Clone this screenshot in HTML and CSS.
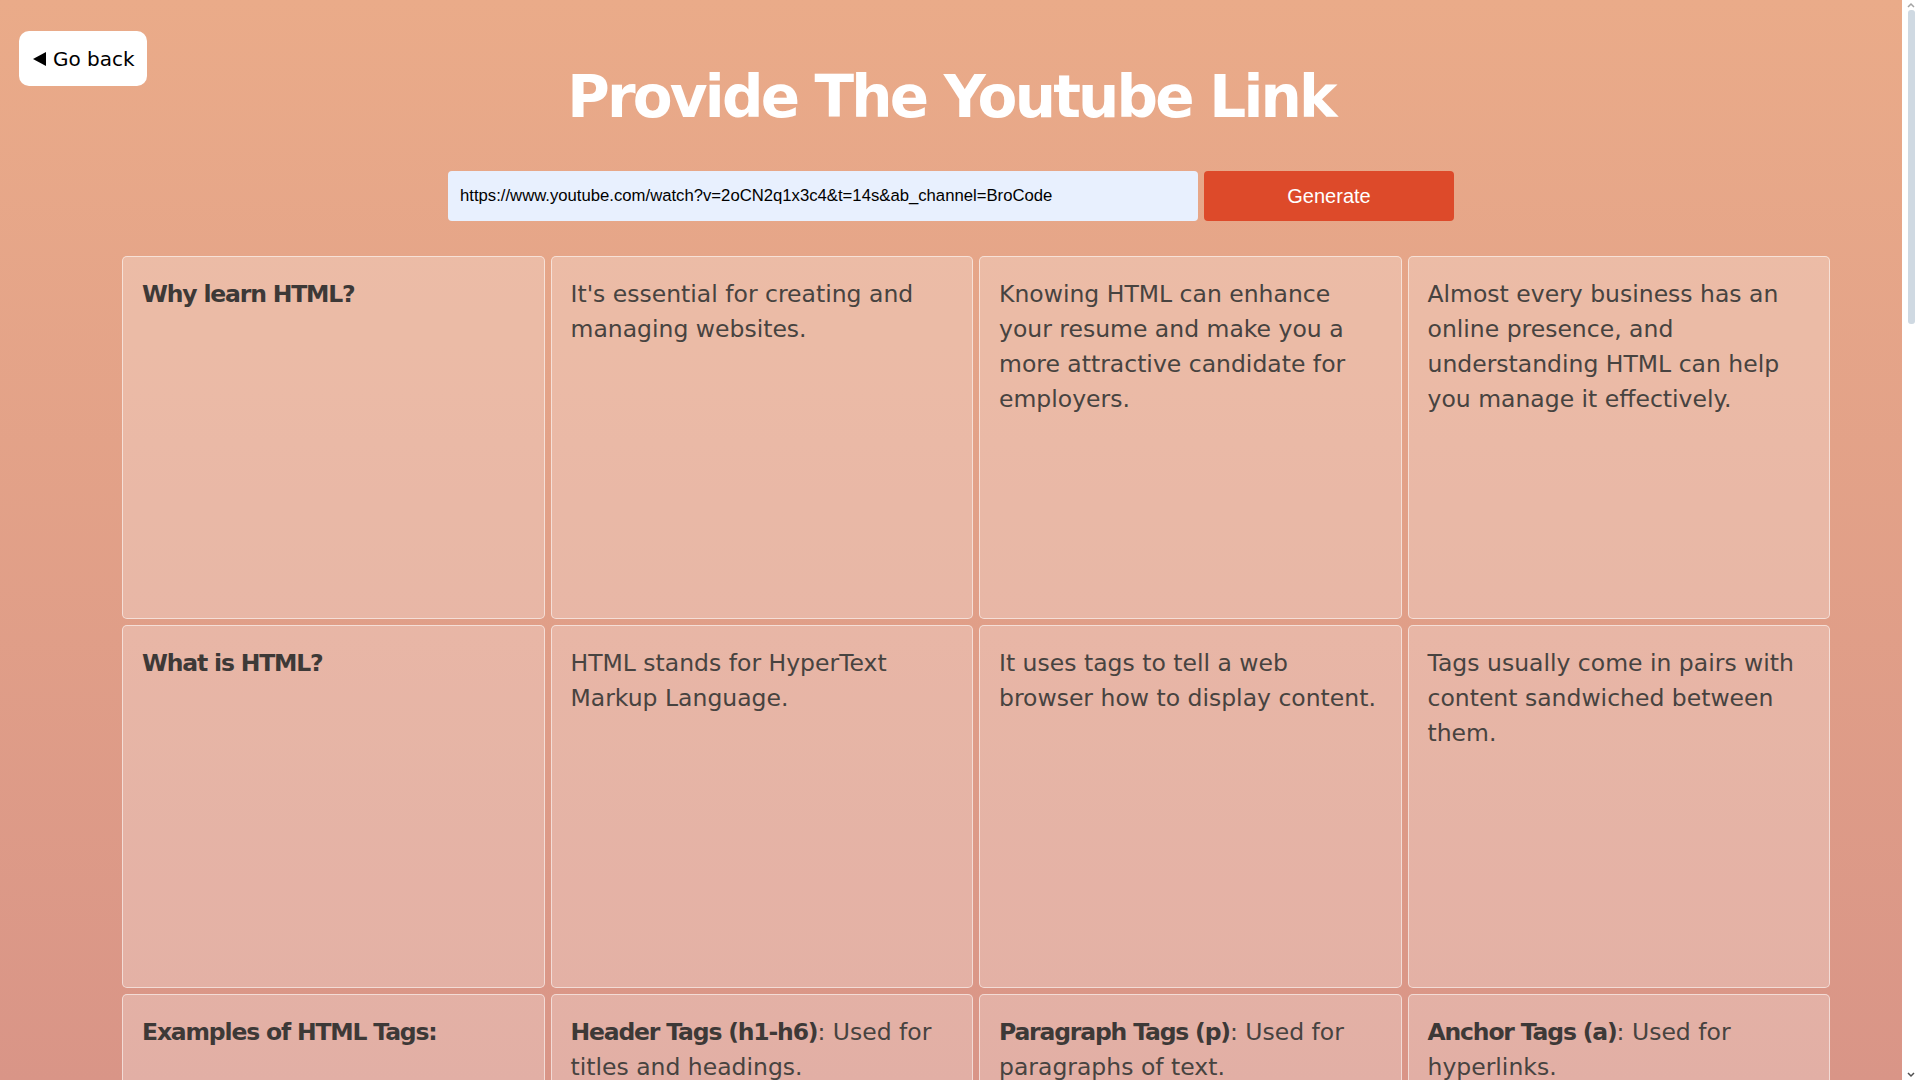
FILE: index.html
```html
<!DOCTYPE html>
<html lang="en">
<head>
<meta charset="utf-8">
<title>Provide The Youtube Link</title>
<link rel="stylesheet" href="styles.css">
</head>
<body>
<header class="top">
  <a class="back" href="#"><svg class="back-icon" width="13" height="14" viewBox="0 0 13 14"><polygon points="13,0 13,14 0,7" fill="#000"/></svg><span>Go back</span></a>
  <h1 class="title">Provide The Youtube Link</h1>
  <div class="spacer"></div>
</header>

<form class="link-form" onsubmit="return false">
  <input class="link-input" type="text" value="https://www.youtube.com/watch?v=2oCN2q1x3c4&amp;t=14s&amp;ab_channel=BroCode">
  <button class="generate" type="button">Generate</button>
</form>

<main class="grid">
  <div class="card"><p class="head">Why learn HTML?</p></div>
  <div class="card"><p>It's essential for creating and managing websites.</p></div>
  <div class="card"><p>Knowing HTML can enhance your resume and make you a more attractive candidate for employers.</p></div>
  <div class="card"><p>Almost every business has an online presence, and understanding HTML can help you manage it effectively.</p></div>

  <div class="card"><p class="head">What is HTML?</p></div>
  <div class="card"><p>HTML stands for HyperText Markup Language.</p></div>
  <div class="card"><p>It uses tags to tell a web browser how to display content.</p></div>
  <div class="card"><p>Tags usually come in pairs with content sandwiched between them.</p></div>

  <div class="card"><p class="head">Examples of HTML Tags:</p></div>
  <div class="card"><p><b>Header Tags (h1-h6)</b>: Used for titles and headings.</p></div>
  <div class="card"><p><b>Paragraph Tags (p)</b>: Used for paragraphs of text.</p></div>
  <div class="card"><p><b>Anchor Tags (a)</b>: Used for hyperlinks.</p></div>

  <div class="card"><p class="head">More HTML Tags:</p></div>
  <div class="card"><p><b>Image Tags (img)</b>: Used to embed pictures.</p></div>
  <div class="card"><p><b>List Tags (ul, ol, li)</b>: Used for lists of items.</p></div>
  <div class="card"><p><b>Division Tags (div)</b>: Used to group content.</p></div>

  <div class="card"><p class="head">HTML Attributes</p></div>
  <div class="card"><p>Attributes give extra information about an element.</p></div>
  <div class="card"><p>They are always written inside the opening tag.</p></div>
  <div class="card"><p>Common attributes include href, src, alt and class.</p></div>

  <div class="card"><p class="head">Structure of a Page</p></div>
  <div class="card"><p>Every document starts with a doctype declaration.</p></div>
  <div class="card"><p>The head holds information about the page.</p></div>
  <div class="card"><p>The body holds everything visible in the browser.</p></div>
</main>

<div class="scrollbar" aria-hidden="true">
  <svg class="sb-arrow" width="18" height="12" viewBox="0 0 18 12"><polyline points="6,7 9,4 12,7" fill="none" stroke="#a3a3a3" stroke-width="1.5"/></svg>
  <span class="sb-thumb"></span>
  <span class="sb-fill"></span>
  <svg class="sb-arrow" width="18" height="12" viewBox="0 0 18 12"><polyline points="6,5 9,8 12,5" fill="none" stroke="#505050" stroke-width="1.5"/></svg>
</div>
</body>
</html>
```

FILE: styles.css
```css
html {
  min-height: 100%;
}

body {
  margin: 0 18px 0 0;
  min-height: 100vh;
  padding-bottom: 60px;
  font-family: "DejaVu Sans", "Noto Sans", sans-serif;
  background: linear-gradient(180deg, #eaab89 0%, #d99587 100%) fixed;
  color: #474442;
}

.top {
  display: grid;
  grid-template-columns: 1fr auto 1fr;
  align-items: start;
}

.back {
  justify-self: start;
  margin: 31px 0 0 19px;
  height: 55px;
  box-sizing: border-box;
  padding: 0 12px 0 14px;
  display: flex;
  align-items: center;
  gap: 7px;
  background: #ffffff;
  border-radius: 10px;
  color: #000;
  text-decoration: none;
  font-size: 20px;
  font-family: "DejaVu Sans", sans-serif;
}

.back-icon {
  display: block;
  margin-top: 1px;
}

.title {
  margin: 62px 0 0;
  font-size: 58px;
  line-height: 70px;
  font-weight: 700;
  letter-spacing: -2.8px;
  color: #ffffff;
  text-align: center;
  white-space: nowrap;
}

.link-form {
  display: flex;
  justify-content: center;
  gap: 6px;
  margin: 39px 0 0;
}

.link-input {
  width: 750px;
  height: 50px;
  box-sizing: border-box;
  border: none;
  border-radius: 4px;
  background: #e8f0fe;
  padding: 0 12px 0 12px;
  font-family: "Liberation Sans", Arial, sans-serif;
  font-size: 16.7px;
  color: #000;
  outline: none;
}

.generate {
  width: 250px;
  height: 50px;
  border: none;
  border-radius: 4px;
  background: #dd4a2a;
  color: #ffffff;
  font-family: "Liberation Sans", Arial, sans-serif;
  font-size: 20px;
  cursor: pointer;
}

.grid {
  display: grid;
  grid-template-columns: repeat(4, 1fr);
  gap: 6px;
  width: 1708px;
  margin: 35px 0 0 122px;
}

.card {
  height: 363px;
  box-sizing: border-box;
  padding: 20px 16px 20px 19px;
  background: rgba(255, 255, 255, 0.25);
  border: 1px solid rgba(255, 255, 255, 0.55);
  border-radius: 5px;
}

.card p {
  margin: 0;
  font-size: 23.5px;
  line-height: 35px;
  color: #474340;
}

.card p.head,
.card b {
  font-weight: 700;
  letter-spacing: -0.05em;
  color: #3d3937;
}

.scrollbar {
  position: fixed;
  top: 0;
  right: 0;
  width: 18px;
  height: 100vh;
  background: #ffffff;
  display: flex;
  flex-direction: column;
  align-items: center;
}

.sb-arrow {
  display: block;
  flex: none;
}

.sb-thumb {
  display: block;
  width: 7px;
  height: 314px;
  margin-top: -2px;
  border-radius: 3px;
  background: #cfd9e2;
}

.sb-fill {
  flex: 1;
}
```
